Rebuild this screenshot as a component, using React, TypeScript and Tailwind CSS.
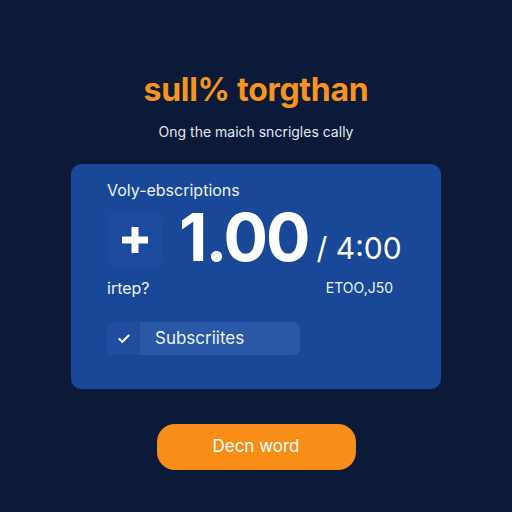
import { Check } from "lucide-react";

export default function App() {
  return (
    <main
      className="w-[512px] h-[512px] bg-[#0b1a38] flex flex-col items-center pt-[72px]"
      style={{ fontFamily: "Inter, 'Liberation Sans', sans-serif" }}
    >
      <h1 className="text-[32px] leading-[36px] font-bold text-[#f7941d] tracking-[-0.3px]">
        sull% torgthan
      </h1>
      <p className="mt-[14px] text-[14px] leading-[20px] text-[#e4e8f2]">
        Ong the maich sncrigles cally
      </p>

      <section className="mt-[22px] w-[370px] h-[225px] rounded-[10px] bg-[#1a4898] pl-[36px] pr-[40px] pt-[15px]">
        <div className="text-[16px] leading-[22px] text-[#eef2fa]">Voly-ebscriptions</div>

        <div className="mt-[6px] flex items-end whitespace-nowrap">
          <div className="w-[55px] h-[55px] shrink-0 rounded-[6px] bg-[#1c4a9e] flex items-center justify-center">
            <svg width="26" height="26" viewBox="0 0 26 26" fill="#fff">
              <rect x="9.5" y="0" width="7" height="26" />
              <rect x="0" y="9.5" width="26" height="7" />
            </svg>
          </div>
          <div className="ml-[17px] text-[66px] leading-[60px] font-bold text-white tracking-[-2px]">1.00</div>
          <div className="ml-[8px] mb-[2px] text-[30px] leading-[34px] text-white">/ 4:00</div>
        </div>

        <div className="mt-[10px] flex items-center justify-between">
          <span className="text-[16px] leading-[22px] text-[#eef2fa]">irtep?</span>
          <span className="mr-[8px] text-[14px] leading-[20px] text-[#eef2fa]">ETOO,J50</span>
        </div>

        <div className="mt-[23px] w-[193px] h-[33px] rounded-[7px] bg-[#2a58a6] flex overflow-hidden">
          <div className="w-[33px] h-full bg-[#1f4ea0] flex items-center justify-center">
            <Check className="w-[14px] h-[14px] text-white" strokeWidth={3.5} />
          </div>
          <div className="pl-[15px] flex items-center text-[17px] text-[#eef2fa]">Subscriites</div>
        </div>
      </section>

      <button className="mt-[35px] w-[199px] h-[46px] rounded-[18px] bg-[#f88e17] text-white text-[17px]">
        Decn word
      </button>
    </main>
  );
}
